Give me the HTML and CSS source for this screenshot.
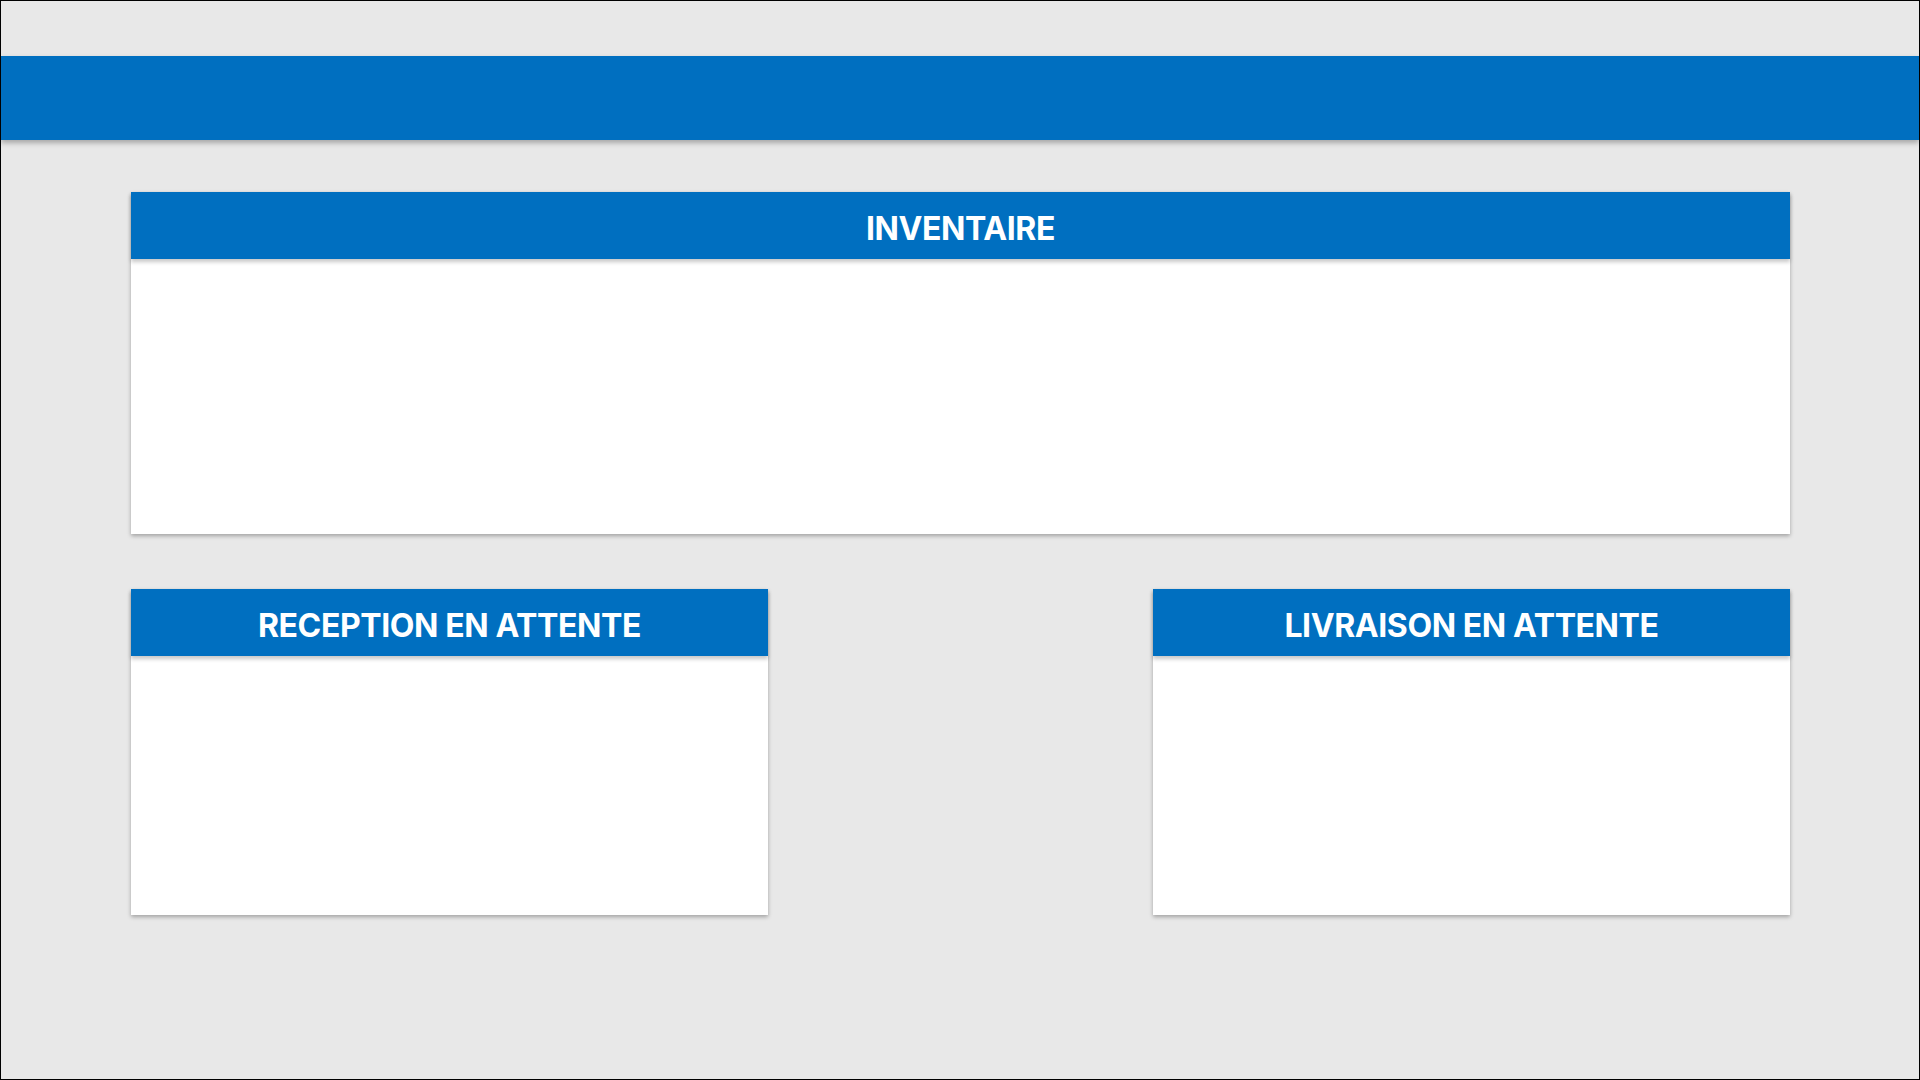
FILE: index.html
```html
<!DOCTYPE html>
<html lang="fr">
<head>
<meta charset="utf-8">
<title>Tableau de bord</title>
<link rel="stylesheet" href="styles.css">
</head>
<body>
<div class="frame">
  <header class="topbar"></header>
  <main class="content">
    <section class="card card-wide">
      <h2 class="card-title">INVENTAIRE</h2>
      <div class="card-body"></div>
    </section>
    <div class="row">
      <section class="card card-half">
        <h2 class="card-title">RECEPTION EN ATTENTE</h2>
        <div class="card-body"></div>
      </section>
      <section class="card card-half">
        <h2 class="card-title">LIVRAISON EN ATTENTE</h2>
        <div class="card-body"></div>
      </section>
    </div>
  </main>
</div>
</body>
</html>
```
FILE: styles.css
```css
* { box-sizing: border-box; }
html, body { margin: 0; padding: 0; }
body {
  width: 1920px;
  height: 1080px;
  background: #e8e8e8;
  font-family: "Inter", "Roboto", "Liberation Sans", sans-serif;
}
.frame {
  width: 1920px;
  height: 1080px;
  border: 1px solid #000;
  background: #e8e8e8;
  overflow: hidden;
}
.topbar {
  margin-top: 55px;
  height: 84px;
  background: #006fc0;
  box-shadow: 0 3px 5px rgba(0, 0, 0, 0.28);
}
.content {
  padding: 52px 129px 0 130px;
  display: flex;
  flex-direction: column;
  gap: 55px;
}
.card {
  background: #fff;
  display: flex;
  flex-direction: column;
  box-shadow: 0 2px 4px rgba(0, 0, 0, 0.3);
}
.card-wide { height: 342px; }
.row {
  display: flex;
  justify-content: space-between;
}
.card-half { width: 637px; height: 326px; }
.card-title {
  margin: 0;
  height: 67px;
  padding-top: 6px;
  display: flex;
  align-items: center;
  justify-content: center;
  background: #006fc0;
  color: #fff;
  font-size: 32px;
  font-weight: 700;
  letter-spacing: -0.4px;
  box-shadow: 0 3px 4px rgba(0, 0, 0, 0.22);
  position: relative;
  z-index: 1;
}
.card-body { flex: 1; }
```
